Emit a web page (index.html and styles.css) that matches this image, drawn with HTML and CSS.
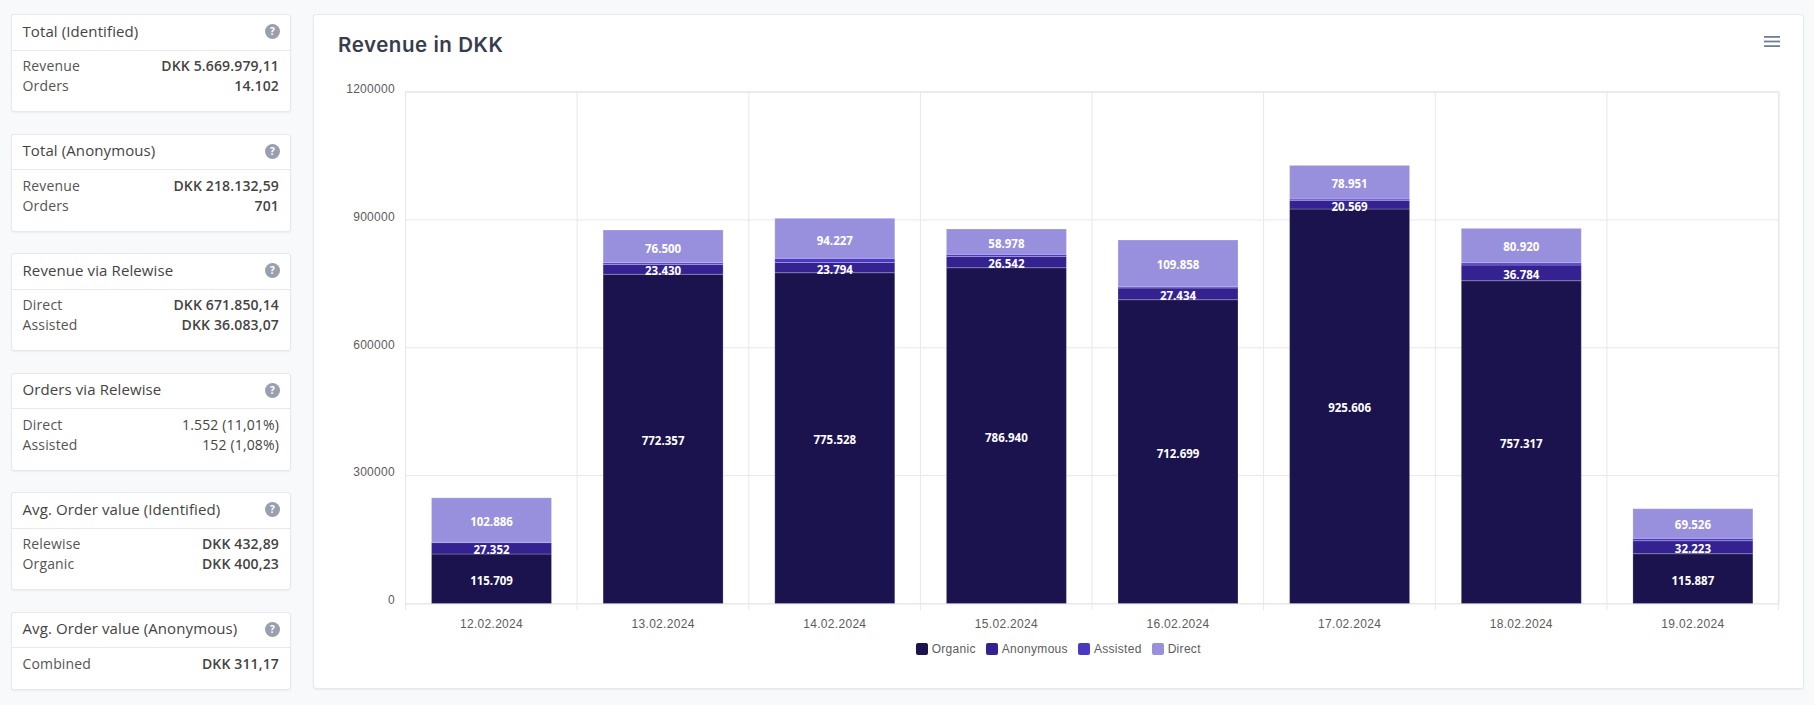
FILE: index.html
```html
<!DOCTYPE html>
<html lang="en">
<head>
  <meta charset="UTF-8">
  <meta name="viewport" content="width=device-width, initial-scale=1.0">
  <title>Revenue in DKK</title>
  <link rel="stylesheet" href="styles.css">
</head>
<body>
  <div class="page">
    <div class="sidebar">
      <div class="stat-card">
        <div class="stat-head"><span>Total (Identified)</span><span class="help">?</span></div>
        <div class="stat-body">
          <div class="stat-row"><span>Revenue</span><b>DKK 5.669.979,11</b></div>
          <div class="stat-row"><span>Orders</span><b>14.102</b></div>
        </div>
      </div>
      <div class="stat-card">
        <div class="stat-head"><span>Total (Anonymous)</span><span class="help">?</span></div>
        <div class="stat-body">
          <div class="stat-row"><span>Revenue</span><b>DKK 218.132,59</b></div>
          <div class="stat-row"><span>Orders</span><b>701</b></div>
        </div>
      </div>
      <div class="stat-card">
        <div class="stat-head"><span>Revenue via Relewise</span><span class="help">?</span></div>
        <div class="stat-body">
          <div class="stat-row"><span>Direct</span><b>DKK 671.850,14</b></div>
          <div class="stat-row"><span>Assisted</span><b>DKK 36.083,07</b></div>
        </div>
      </div>
      <div class="stat-card">
        <div class="stat-head"><span>Orders via Relewise</span><span class="help">?</span></div>
        <div class="stat-body">
          <div class="stat-row"><span>Direct</span><b class="plain">1.552 (11,01%)</b></div>
          <div class="stat-row"><span>Assisted</span><b class="plain">152 (1,08%)</b></div>
        </div>
      </div>
      <div class="stat-card">
        <div class="stat-head"><span>Avg. Order value (Identified)</span><span class="help">?</span></div>
        <div class="stat-body">
          <div class="stat-row"><span>Relewise</span><b>DKK 432,89</b></div>
          <div class="stat-row"><span>Organic</span><b>DKK 400,23</b></div>
        </div>
      </div>
      <div class="stat-card">
        <div class="stat-head"><span>Avg. Order value (Anonymous)</span><span class="help">?</span></div>
        <div class="stat-body">
          <div class="stat-row"><span>Combined</span><b>DKK 311,17</b></div>
        </div>
      </div>
    </div>

    <div class="chart-card">
      <div class="chart-head">
        <h2>Revenue in DKK</h2>
        <svg class="menu-icon" width="16" height="11" viewBox="0 0 16 11">
          <rect y="0" width="16" height="1.8"></rect>
          <rect y="4.6" width="16" height="1.8"></rect>
          <rect y="9.2" width="16" height="1.8"></rect>
        </svg>
      </div>

      <!-- viewBox uses page coordinates so the numbers can be read off the screenshot -->
      <svg class="chart" width="1489" height="565" viewBox="314 71 1489 565">
        <g class="grid">
          <path d="M405.5 92H1778.5M405.5 219.9H1778.5M405.5 347.8H1778.5M405.5 475.6H1778.5"></path>
          <path d="M405.5 92V610M577.1 92V610M748.8 92V610M920.4 92V610M1092 92V610M1263.6 92V610M1435.3 92V610M1606.9 92V610M1778.5 92V610"></path>
          <path class="axis" d="M405.5 603.7H1778.5"></path>
          <path class="axis" d="M405 92H1779M1778.7 92V604"></path>
        </g>

        <g class="y-labels">
          <text x="395" y="93">1200000</text>
          <text x="395" y="221">900000</text>
          <text x="395" y="349">600000</text>
          <text x="395" y="476">300000</text>
          <text x="395" y="604">0</text>
        </g>

        <g class="bars">
          <rect class="s-organic" x="431.5" y="554" width="120" height="49.5"></rect>
          <rect class="s-anon" x="431.5" y="542.6" width="120" height="11.4"></rect>
          <rect class="s-assisted" x="431.5" y="542.2" width="120" height="0.4"></rect>
          <rect class="s-direct" x="431.5" y="497.8" width="120" height="44.4"></rect>

          <rect class="s-organic" x="603.1" y="274.3" width="120" height="329.2"></rect>
          <rect class="s-anon" x="603.1" y="264.5" width="120" height="9.8"></rect>
          <rect class="s-assisted" x="603.1" y="262.7" width="120" height="1.8"></rect>
          <rect class="s-direct" x="603.1" y="230" width="120" height="32.7"></rect>

          <rect class="s-organic" x="774.8" y="272.7" width="120" height="330.8"></rect>
          <rect class="s-anon" x="774.8" y="262.5" width="120" height="10.2"></rect>
          <rect class="s-assisted" x="774.8" y="258.3" width="120" height="4.2"></rect>
          <rect class="s-direct" x="774.8" y="218.3" width="120" height="40"></rect>

          <rect class="s-organic" x="946.4" y="267.7" width="120" height="335.8"></rect>
          <rect class="s-anon" x="946.4" y="256.5" width="120" height="11.2"></rect>
          <rect class="s-assisted" x="946.4" y="254.3" width="120" height="2.2"></rect>
          <rect class="s-direct" x="946.4" y="229" width="120" height="25.3"></rect>

          <rect class="s-organic" x="1118" y="299.7" width="120" height="303.8"></rect>
          <rect class="s-anon" x="1118" y="288" width="120" height="11.7"></rect>
          <rect class="s-assisted" x="1118" y="286.8" width="120" height="1.2"></rect>
          <rect class="s-direct" x="1118" y="240" width="120" height="46.8"></rect>

          <rect class="s-organic" x="1289.6" y="209" width="120" height="394.5"></rect>
          <rect class="s-anon" x="1289.6" y="200.4" width="120" height="8.6"></rect>
          <rect class="s-assisted" x="1289.6" y="199" width="120" height="1.4"></rect>
          <rect class="s-direct" x="1289.6" y="165.4" width="120" height="33.6"></rect>

          <rect class="s-organic" x="1461.3" y="280.7" width="120" height="322.8"></rect>
          <rect class="s-anon" x="1461.3" y="265" width="120" height="15.7"></rect>
          <rect class="s-assisted" x="1461.3" y="262.8" width="120" height="2.2"></rect>
          <rect class="s-direct" x="1461.3" y="228.4" width="120" height="34.4"></rect>

          <rect class="s-organic" x="1632.9" y="553.7" width="120" height="49.8"></rect>
          <rect class="s-anon" x="1632.9" y="540.7" width="120" height="13"></rect>
          <rect class="s-assisted" x="1632.9" y="538.3" width="120" height="2.4"></rect>
          <rect class="s-direct" x="1632.9" y="508.7" width="120" height="29.6"></rect>
        </g>

        <g class="bar-labels">
          <text x="491.5" y="526">102.886</text>
          <text x="491.5" y="554">27.352</text>
          <text x="491.5" y="585">115.709</text>
          <text x="663.1" y="253">76.500</text>
          <text x="663.1" y="275">23.430</text>
          <text x="663.1" y="445">772.357</text>
          <text x="834.8" y="245">94.227</text>
          <text x="834.8" y="274">23.794</text>
          <text x="834.8" y="444">775.528</text>
          <text x="1006.4" y="248">58.978</text>
          <text x="1006.4" y="268">26.542</text>
          <text x="1006.4" y="442">786.940</text>
          <text x="1178" y="269">109.858</text>
          <text x="1178" y="300">27.434</text>
          <text x="1178" y="458">712.699</text>
          <text x="1349.6" y="188">78.951</text>
          <text x="1349.6" y="211">20.569</text>
          <text x="1349.6" y="412">925.606</text>
          <text x="1521.3" y="251">80.920</text>
          <text x="1521.3" y="279">36.784</text>
          <text x="1521.3" y="448">757.317</text>
          <text x="1692.9" y="529">69.526</text>
          <text x="1692.9" y="553">32.223</text>
          <text x="1692.9" y="585">115.887</text>
        </g>

        <g class="x-labels">
          <text x="491.5" y="628">12.02.2024</text>
          <text x="663.1" y="628">13.02.2024</text>
          <text x="834.8" y="628">14.02.2024</text>
          <text x="1006.4" y="628">15.02.2024</text>
          <text x="1178" y="628">16.02.2024</text>
          <text x="1349.6" y="628">17.02.2024</text>
          <text x="1521.3" y="628">18.02.2024</text>
          <text x="1692.9" y="628">19.02.2024</text>
        </g>
      </svg>

      <div class="legend">
        <span class="legend-item"><i class="marker m-organic"></i>Organic</span>
        <span class="legend-item"><i class="marker m-anon"></i>Anonymous</span>
        <span class="legend-item"><i class="marker m-assisted"></i>Assisted</span>
        <span class="legend-item"><i class="marker m-direct"></i>Direct</span>
      </div>
    </div>
  </div>
</body>
</html>
```

FILE: styles.css
```css
html, body {
  margin: 0;
  padding: 0;
  background-color: #f8f9fb;
}
body {
  font-family: "Open Sans", sans-serif;
  font-size: 14px;
  color: #555;
}
.page {
  display: flex;
  gap: 22px;
  height: 705px;
  box-sizing: border-box;
  padding: 14px 10px 16px 11px;
}

/* left column */
.sidebar {
  width: 280px;
  flex: none;
  display: flex;
  flex-direction: column;
  gap: 21.5px;
}
.stat-card {
  background: #fff;
  border: 1px solid #e8e9ee;
  border-radius: 3px;
  box-shadow: 0 1px 2px rgba(0, 0, 0, 0.05);
  box-sizing: border-box;
}
.stat-head {
  display: flex;
  align-items: center;
  justify-content: space-between;
  height: 35.5px;
  box-sizing: border-box;
  padding: 0 10px 3px 10.5px;
  border-bottom: 1px solid #e8e9ee;
  color: #444;
  font-size: 15px;
  letter-spacing: 0.1px;
}
.help {
  width: 15px;
  height: 15px;
  margin-top: 1.5px;
  border-radius: 50%;
  background: #9a9fb0;
  color: #fff;
  font-size: 10px;
  font-weight: 700;
  line-height: 15px;
  letter-spacing: 0;
  text-align: center;
}
.stat-body {
  padding: 5.5px 11px 15px 10.5px;
}
.stat-row {
  display: flex;
  justify-content: space-between;
  line-height: 20px;
  height: 20px;
  letter-spacing: 0.15px;
}
.stat-row b {
  font-weight: 600;
  color: #444;
}
.stat-row b.plain {
  font-weight: 400;
}

/* chart */
.chart-card {
  flex: 1;
  background: #fff;
  border: 1px solid #e8e9ee;
  border-radius: 3px;
  box-shadow: 0 1px 2px rgba(0, 0, 0, 0.05);
  box-sizing: border-box;
}
.chart-head {
  display: flex;
  justify-content: space-between;
  align-items: flex-start;
  height: 56px;
  box-sizing: border-box;
  padding: 16px 23px 0 24px;
}
.chart-head h2 {
  margin: 0;
  font-family: Inter, sans-serif;
  font-size: 20.5px;
  font-weight: 600;
  line-height: 28px;
  letter-spacing: 0.55px;
  color: #373d4f;
}
.menu-icon {
  margin-top: 4.5px;
  fill: #6e8192;
}
.chart {
  display: block;
}
.grid path {
  fill: none;
  stroke: #e8e8ea;
  stroke-width: 1;
}
.grid path.axis {
  stroke-width: 1.6;
}
.y-labels text,
.x-labels text {
  font-family: "Liberation Sans", sans-serif;
  font-size: 12px;
  letter-spacing: 0.3px;
  fill: #5c5c5c;
}
.y-labels text {
  text-anchor: end;
}
.x-labels text {
  text-anchor: middle;
}
.bars rect {
  stroke: rgba(255, 255, 255, 0.22);
  stroke-width: 1;
}
.s-organic { fill: #1b134e; }
.s-anon { fill: #33228f; }
.s-assisted { fill: #4b39c6; }
.s-direct { fill: #9890dd; }
.bar-labels text {
  font-family: "Open Sans", sans-serif;
  font-size: 11.5px;
  font-weight: 700;
  fill: #fff;
  text-anchor: middle;
}

.legend {
  display: flex;
  justify-content: center;
  gap: 10.5px;
  height: 14px;
  margin-top: 6px;
  font-family: "Liberation Sans", sans-serif;
  font-size: 12px;
  letter-spacing: 0.3px;
  line-height: 14px;
  color: #5c5c5c;
}
.legend-item {
  display: flex;
  align-items: center;
  gap: 3.5px;
}
.marker {
  width: 12px;
  height: 12px;
  border-radius: 2px;
}
.m-organic { background: #1b134e; }
.m-anon { background: #33228f; }
.m-assisted { background: #4b39c6; }
.m-direct { background: #9890dd; }
```
